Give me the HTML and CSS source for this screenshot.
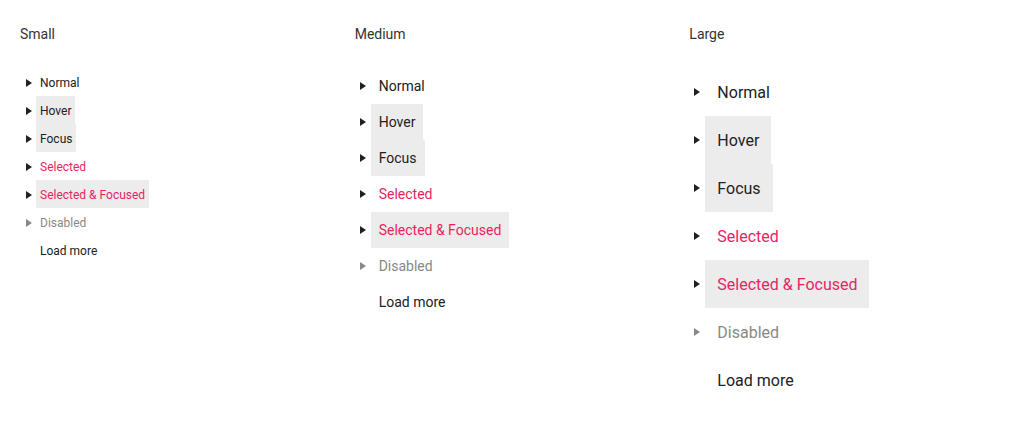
FILE: index.html
```html
<!DOCTYPE html>
<html>
<head>
<meta charset="utf-8">
<link rel="stylesheet" href="styles.css">
</head>
<body>
<div class="page">
  <section class="col">
    <h3 class="title">Small</h3>
    <ul class="tree sm">
      <li class="node"><span class="arrow"></span><span class="label">Normal</span></li>
      <li class="node"><span class="arrow"></span><span class="label hl">Hover</span></li>
      <li class="node"><span class="arrow"></span><span class="label hl">Focus</span></li>
      <li class="node"><span class="arrow"></span><span class="label sel">Selected</span></li>
      <li class="node"><span class="arrow"></span><span class="label sel hl">Selected &amp; Focused</span></li>
      <li class="node dis"><span class="arrow"></span><span class="label">Disabled</span></li>
      <li class="node"><span class="noarrow"></span><span class="label">Load more</span></li>
    </ul>
  </section>
  <section class="col">
    <h3 class="title">Medium</h3>
    <ul class="tree md">
      <li class="node"><span class="arrow"></span><span class="label">Normal</span></li>
      <li class="node"><span class="arrow"></span><span class="label hl">Hover</span></li>
      <li class="node"><span class="arrow"></span><span class="label hl">Focus</span></li>
      <li class="node"><span class="arrow"></span><span class="label sel">Selected</span></li>
      <li class="node"><span class="arrow"></span><span class="label sel hl">Selected &amp; Focused</span></li>
      <li class="node dis"><span class="arrow"></span><span class="label">Disabled</span></li>
      <li class="node"><span class="noarrow"></span><span class="label">Load more</span></li>
    </ul>
  </section>
  <section class="col">
    <h3 class="title">Large</h3>
    <ul class="tree lg">
      <li class="node"><span class="arrow"></span><span class="label">Normal</span></li>
      <li class="node"><span class="arrow"></span><span class="label hl">Hover</span></li>
      <li class="node"><span class="arrow"></span><span class="label hl">Focus</span></li>
      <li class="node"><span class="arrow"></span><span class="label sel">Selected</span></li>
      <li class="node"><span class="arrow"></span><span class="label sel hl">Selected &amp; Focused</span></li>
      <li class="node dis"><span class="arrow"></span><span class="label">Disabled</span></li>
      <li class="node"><span class="noarrow"></span><span class="label">Load more</span></li>
    </ul>
  </section>
</div>
</body>
</html>
```
FILE: styles.css
```css
* { box-sizing: border-box; }
html, body { margin: 0; padding: 0; background: #fff; }
body {
  font-family: Roboto, "Liberation Sans", Arial, sans-serif;
  color: #212121;
}
.page {
  display: flex;
  padding: 24px 0 0 20px;
}
.col { flex: 1; min-width: 0; }
.title {
  margin: 0 0 24px 0;
  font-size: 14px;
  font-weight: 400;
  line-height: 20px;
  color: #333;
}
.tree { list-style: none; margin: 0; padding: 0; }
.node {
  display: flex;
  align-items: stretch;
}
.arrow, .noarrow {
  width: 16px;
  flex: none;
  display: flex;
  align-items: center;
  justify-content: center;
}
.arrow::before {
  content: "";
  display: block;
  width: 0;
  height: 0;
  border-top: 4px solid transparent;
  border-bottom: 4px solid transparent;
  border-left: 6px solid #212121;
  margin-left: 2px;
}
.label {
  display: flex;
  align-items: center;
}
.hl { background: #ececec; }
.sel { color: #e91e63; }
.dis { color: #888; }
.dis .arrow::before { border-left-color: #888; }

.sm .node { height: 28px; font-size: 12px; }
.sm .label { padding: 2px 4px 0; }
.sm .arrow { padding-top: 2px; }
.md .node { height: 36px; font-size: 14px; }
.md .label { padding: 0 8px; }
.lg .node { height: 48px; font-size: 16px; }
.lg .label { padding: 0 12px; }
.lg .arrow::before { margin-left: 0; }
.md .arrow::before { margin-left: 1px; }
```
